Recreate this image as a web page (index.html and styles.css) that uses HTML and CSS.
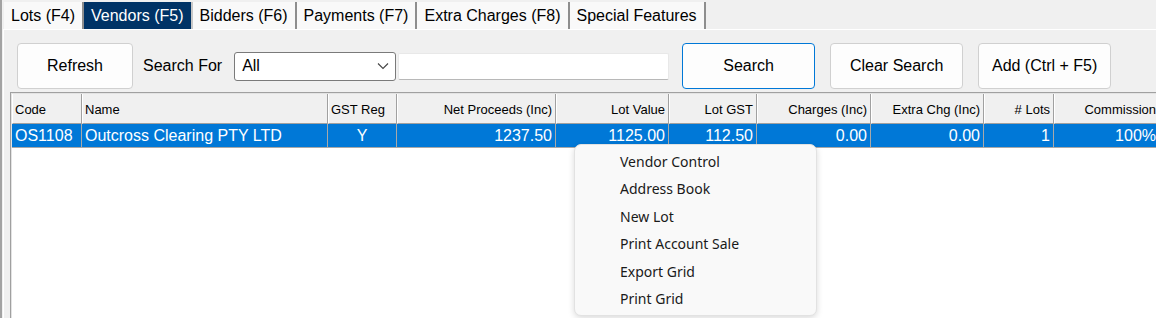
FILE: index.html
```html
<!DOCTYPE html>
<html lang="en">
<head>
  <meta charset="UTF-8" />
  <title>Vendors</title>
  <link rel="stylesheet" href="styles.css">
</head>
<body>
  <div class="window">
    <div class="tabs">
      <div class="tab">Lots (F4)</div>
      <div class="tab active">Vendors (F5)</div>
      <div class="tab">Bidders (F6)</div>
      <div class="tab">Payments (F7)</div>
      <div class="tab">Extra Charges (F8)</div>
      <div class="tab">Special Features</div>
    </div>

    <div class="panel">
      <div class="toolbar">
        <button type="button" class="btn btn-refresh">Refresh</button>
        <span class="search-label">Search For</span>
        <div class="combo">
          <span>All</span>
          <svg width="12" height="8" viewBox="0 0 12 8"><path d="M1 1.5 L6 6.5 L11 1.5" fill="none" stroke="#444" stroke-width="1.1"/></svg>
        </div>
        <input type="text" class="search-input">
        <button type="button" class="btn btn-primary">Search</button>
        <button type="button" class="btn">Clear Search</button>
        <button type="button" class="btn">Add (Ctrl + F5)</button>
      </div>

      <div class="grid">
        <table>
          <thead>
            <tr>
              <th class="c-code">Code</th>
              <th class="c-name">Name</th>
              <th class="c-gst">GST Reg</th>
              <th class="c-net num">Net Proceeds (Inc)</th>
              <th class="c-lotval num">Lot Value</th>
              <th class="c-lotgst num">Lot GST</th>
              <th class="c-chg num">Charges (Inc)</th>
              <th class="c-extra num">Extra Chg (Inc)</th>
              <th class="c-lots num">#&nbsp;Lots</th>
              <th class="c-comm num">Commission</th>
            </tr>
          </thead>
          <tbody>
            <tr class="selected">
              <td>OS1108</td>
              <td>Outcross Clearing PTY LTD</td>
              <td class="center">Y</td>
              <td class="num">1237.50</td>
              <td class="num">1125.00</td>
              <td class="num">112.50</td>
              <td class="num">0.00</td>
              <td class="num">0.00</td>
              <td class="num">1</td>
              <td class="num">100%</td>
            </tr>
          </tbody>
        </table>
      </div>
    </div>

    <!-- right-click menu over the grid -->
    <ul class="context-menu">
      <li>Vendor Control</li>
      <li>Address Book</li>
      <li>New Lot</li>
      <li>Print Account Sale</li>
      <li>Export Grid</li>
      <li>Print Grid</li>
    </ul>
  </div>
</body>
</html>
```

FILE: styles.css
```css
html, body {
  margin: 0;
  height: 100%;
  overflow: hidden;
}
body {
  font-family: 'Liberation Sans', Arial, sans-serif;
  background: #f0f0f0;
  color: #000;
}
.window {
  position: relative;
  height: 100%;
  border-left: 2px solid #a3a3a3;
  display: flex;
  flex-direction: column;
}

/* tabs */
.tabs {
  display: flex;
  align-items: flex-end;
  height: 29px;
  padding-left: 2px;
}
.tab {
  height: 27px;
  line-height: 27px;
  padding: 0 7px;
  font-size: 16px;
  background: #f9f9f9;
  border-right: 2px solid #8e8e8e;
  box-sizing: border-box;
  white-space: nowrap;
}
.tab.active {
  background: #003366;
  color: #fff;
  border-right-color: #c8c8c8;
}

/* panel */
.panel {
  flex: 1;
  display: flex;
  flex-direction: column;
  border-top: 1px solid #fff;
  border-left: 1px solid #fff;
  margin-left: 1px;
  padding: 13px 0 0 6px;
  min-height: 0;
}
.toolbar {
  display: flex;
  align-items: center;
  height: 46px;
  margin-left: 7px;
}
.btn {
  height: 46px;
  width: 133px;
  font-family: 'Liberation Sans', Arial, sans-serif;
  font-size: 16px;
  color: #000;
  background: #fdfdfd;
  border: 1px solid #d0d0d0;
  border-radius: 4px;
  margin-right: 15px;
  padding: 0;
}
.btn-refresh {
  width: 116px;
  margin-right: 10px;
}
.btn-primary {
  border-color: #0078d7;
}
.search-label {
  font-size: 16px;
  margin-right: 12px;
}
.combo {
  width: 162px;
  height: 29px;
  box-sizing: border-box;
  background: #fff;
  border: 1px solid #7a7a7a;
  border-radius: 3px;
  display: flex;
  align-items: center;
  justify-content: space-between;
  padding: 0 6px 0 7px;
  font-size: 16px;
  margin-right: 2px;
}
.search-input {
  width: 271px;
  height: 27px;
  box-sizing: border-box;
  border: 1px solid #e8e8e8;
  border-bottom-color: #b8b8b8;
  border-radius: 2px;
  background: #fff;
  margin: 0 13px 0 0;
  padding: 0;
}

/* grid */
.grid {
  flex: 1;
  margin-top: 3px;
  background: #fff;
  border-top: 1px solid #a0a0a0;
  border-left: 1px solid #a0a0a0;
  box-shadow: inset 1px 1px 0 #e3e3e3;
  padding: 1px 0 0 1px;
  overflow: hidden;
}
table {
  border-collapse: separate;
  border-spacing: 0;
  table-layout: fixed;
  width: 1148px;
}
th, td {
  box-sizing: border-box;
  white-space: nowrap;
  overflow: hidden;
  padding: 0 3px;
  text-align: left;
}
th {
  height: 30px;
  font-size: 13px;
  font-weight: normal;
  background: #f0f0f0;
  border-left: 1px solid #fff;
  border-right: 1px solid #a0a0a0;
  border-bottom: 1px solid #a0a0a0;
  padding-left: 2px;
  padding-top: 1px;
}
td {
  height: 24px;
  font-size: 16px;
  border-right: 1px solid #a8a8a8;
  border-bottom: 1px solid #a8a8a8;
}
.num { text-align: right; }
.center { text-align: center; }
tr.selected td {
  background: #0078d7;
  color: #fff;
}
.c-code { width: 70px; }
.c-name { width: 246px; }
.c-gst { width: 69px; }
.c-net { width: 159px; }
.c-lotval { width: 113px; }
.c-lotgst { width: 88px; }
.c-chg { width: 114px; }
.c-extra { width: 113px; }
.c-lots { width: 70px; }
.c-comm { width: 106px; }

/* context menu */
.context-menu {
  position: absolute;
  left: 572px;
  top: 144px;
  width: 243px;
  height: 172px;
  box-sizing: border-box;
  margin: 0;
  padding: 3px 0 0 0;
  list-style: none;
  background: #f9f9f9;
  border: 1px solid #e2e2e2;
  border-radius: 7px;
  box-shadow: 0 2px 6px rgba(0,0,0,0.15);
  font-family: 'Noto Sans', 'Open Sans', sans-serif;
  font-size: 14px;
  color: #1a1a1a;
}
.context-menu li {
  height: 27.4px;
  line-height: 27.4px;
  padding-left: 45px;
}
```
